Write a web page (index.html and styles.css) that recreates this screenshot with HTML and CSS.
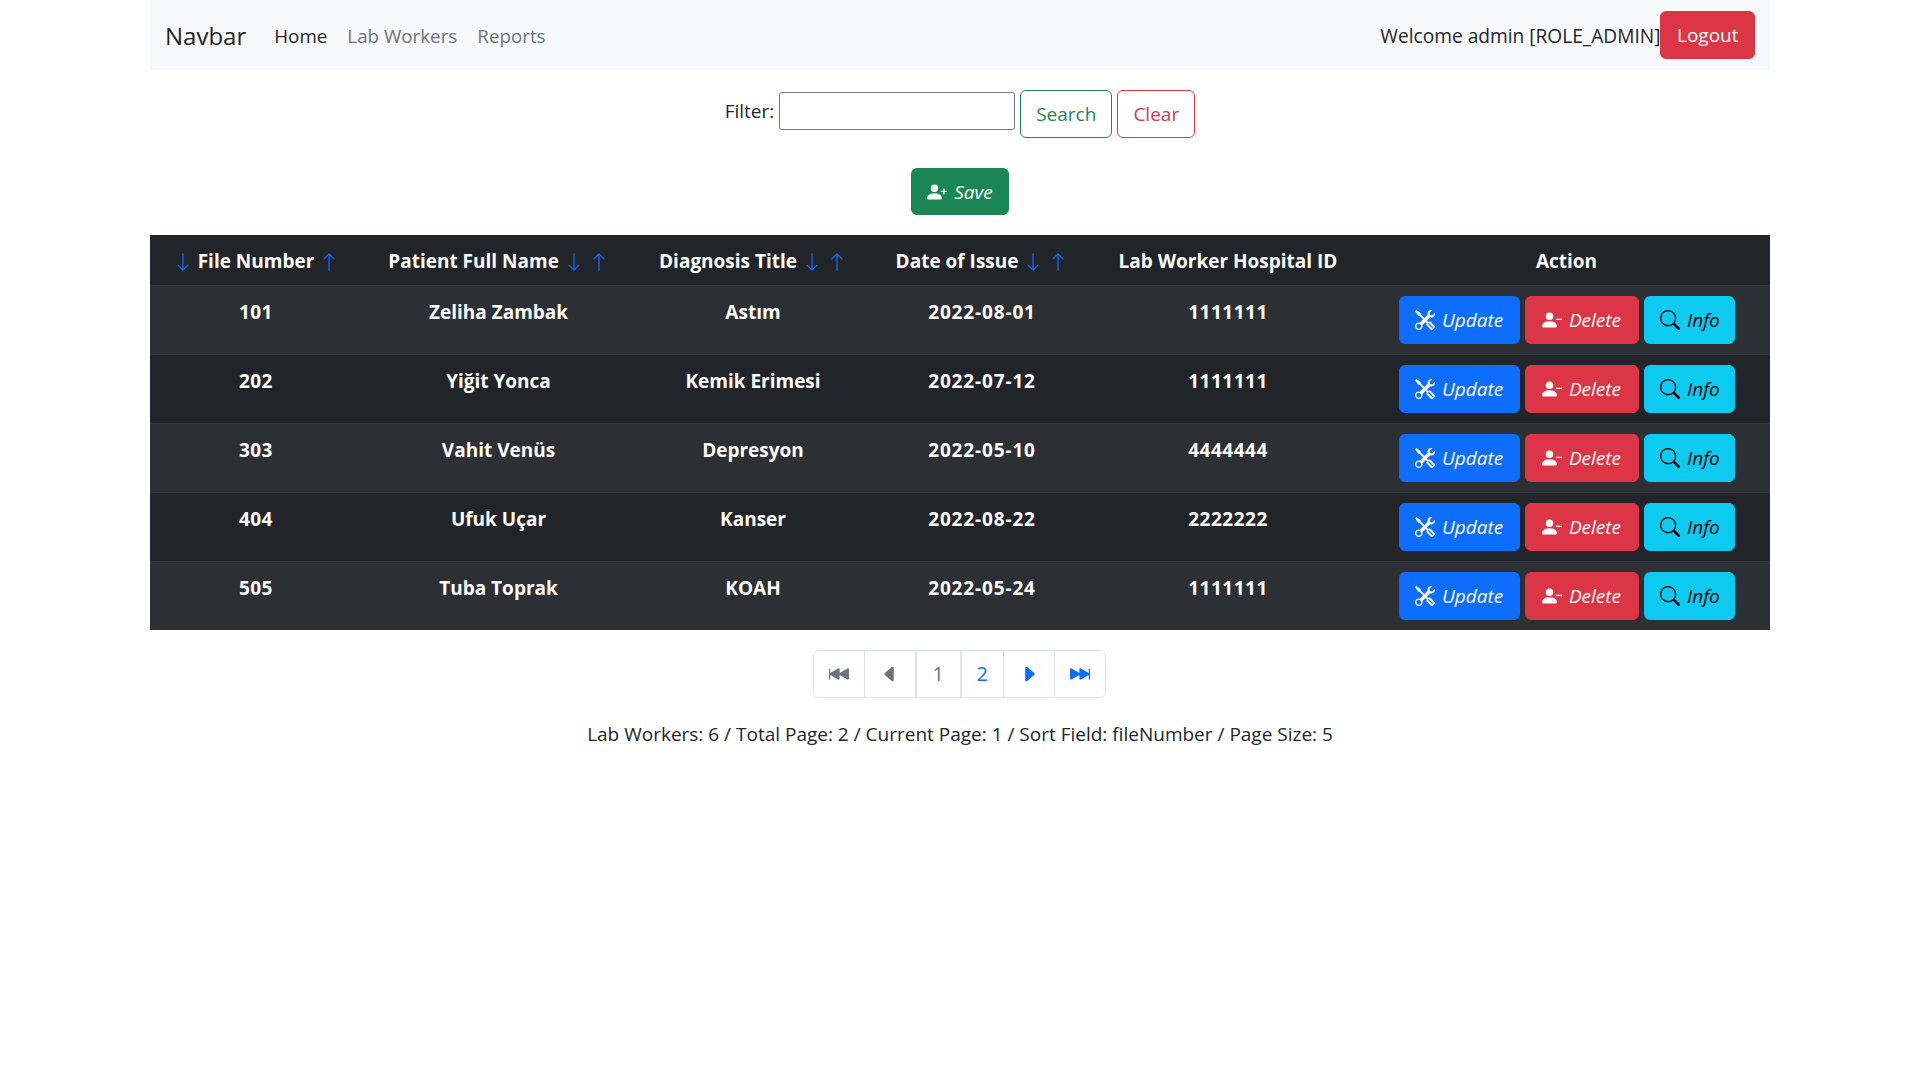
FILE: index.html
```html
<!DOCTYPE html>
<html lang="en">
<head>
<meta charset="UTF-8">
<meta name="viewport" content="width=device-width, initial-scale=1.0">
<title>Lab Workers</title>
<link rel="stylesheet" href="styles.css">
</head>
<body>
<svg class="sprite" xmlns="http://www.w3.org/2000/svg">
    <symbol id="i-down" viewBox="0 0 16 16"><path fill-rule="evenodd" d="M8 1a.5.5 0 0 1 .5.5v11.793l3.146-3.147a.5.5 0 0 1 .708.708l-4 4a.5.5 0 0 1-.708 0l-4-4a.5.5 0 0 1 .708-.708L7.5 13.293V1.5A.5.5 0 0 1 8 1z"/></symbol>
    <symbol id="i-up" viewBox="0 0 16 16"><path fill-rule="evenodd" d="M8 15a.5.5 0 0 0 .5-.5V2.707l3.146 3.147a.5.5 0 0 0 .708-.708l-4-4a.5.5 0 0 0-.708 0l-4 4a.5.5 0 1 0 .708.708L7.5 2.707V14.5a.5.5 0 0 0 .5.5z"/></symbol>
    <symbol id="i-tools" viewBox="0 0 16 16"><path d="M1 0 0 1l2.2 3.081a1 1 0 0 0 .815.419h.07a1 1 0 0 1 .708.293l2.675 2.675-2.617 2.654A3.003 3.003 0 0 0 0 13a3 3 0 1 0 5.878-.851l2.654-2.617.968.968-.305.914a1 1 0 0 0 .242 1.023l3.27 3.27a.997.997 0 0 0 1.414 0l1.586-1.586a.997.997 0 0 0 0-1.414l-3.27-3.27a1 1 0 0 0-1.023-.242L10.5 9.5l-.96-.96 2.68-2.643A3.005 3.005 0 0 0 16 3c0-.269-.035-.53-.102-.777l-2.14 2.141L12 4l-.364-1.757L13.777.102a3 3 0 0 0-3.675 3.68L7.462 6.46 4.793 3.793a1 1 0 0 1-.293-.707v-.071a1 1 0 0 0-.419-.814L1 0zm9.646 10.646a.5.5 0 0 1 .708 0l3 3a.5.5 0 0 1-.708.708l-3-3a.5.5 0 0 1 0-.708zM3 11l.471.242.529.026.287.445.445.287.026.529L5 13l-.242.471-.026.529-.445.287-.287.445-.529.026L3 15l-.471-.242L2 14.732l-.287-.445L1.268 14l-.026-.529L1 13l.242-.471.026-.529.445-.287.287-.445.529-.026L3 11z"/></symbol>
    <symbol id="i-person-plus" viewBox="0 0 16 16"><path d="M1 14s-1 0-1-1 1-4 6-4 6 3 6 4-1 1-1 1H1zm5-6a3 3 0 1 0 0-6 3 3 0 0 0 0 6z"/><path fill-rule="evenodd" d="M13.5 5a.5.5 0 0 1 .5.5V7h1.5a.5.5 0 0 1 0 1H14v1.5a.5.5 0 0 1-1 0V8h-1.5a.5.5 0 0 1 0-1H13V5.5a.5.5 0 0 1 .5-.5z"/></symbol>
    <symbol id="i-person-dash" viewBox="0 0 16 16"><path d="M1 14s-1 0-1-1 1-4 6-4 6 3 6 4-1 1-1 1H1zm5-6a3 3 0 1 0 0-6 3 3 0 0 0 0 6z"/><path fill-rule="evenodd" d="M11 7.5a.5.5 0 0 1 .5-.5h4a.5.5 0 0 1 0 1h-4a.5.5 0 0 1-.5-.5z"/></symbol>
    <symbol id="i-search" viewBox="0 0 16 16"><path d="M11.742 10.344a6.5 6.5 0 1 0-1.397 1.398h-.001c.03.04.062.078.098.115l3.85 3.85a1 1 0 0 0 1.415-1.414l-3.85-3.85a1.007 1.007 0 0 0-.115-.1zM12 6.5a5.5 5.5 0 1 1-11 0 5.5 5.5 0 0 1 11 0z"/></symbol>
    <symbol id="i-first" viewBox="0 0 16 16"><path d="M.5 3.5A.5.5 0 0 0 0 4v8a.5.5 0 0 0 1 0V8.753l6.267 3.636c.54.313 1.233-.066 1.233-.697v-2.94l6.267 3.636c.54.314 1.233-.065 1.233-.696V4.308c0-.63-.693-1.01-1.233-.696L8.5 7.248v-2.94c0-.63-.692-1.01-1.233-.696L1 7.248V4a.5.5 0 0 0-.5-.5z"/></symbol>
    <symbol id="i-prev" viewBox="0 0 16 16"><path d="m3.86 8.753 5.482 4.796c.646.566 1.658.106 1.658-.753V3.204a1 1 0 0 0-1.659-.753l-5.48 4.796a1 1 0 0 0 0 1.506z"/></symbol>
    <symbol id="i-next" viewBox="0 0 16 16"><path d="m12.14 8.753-5.482 4.796c-.646.566-1.658.106-1.658-.753V3.204a1 1 0 0 1 1.659-.753l5.48 4.796a1 1 0 0 1 0 1.506z"/></symbol>
    <symbol id="i-last" viewBox="0 0 16 16"><path d="M15.5 3.5a.5.5 0 0 1 .5.5v8a.5.5 0 0 1-1 0V8.753l-6.267 3.636c-.54.313-1.233-.066-1.233-.697v-2.94l-6.267 3.636C.693 12.703 0 12.324 0 11.693V4.308c0-.63.693-1.01 1.233-.696L7.5 7.248v-2.94c0-.63.693-1.01 1.233-.696L15 7.248V4a.5.5 0 0 1 .5-.5z"/></symbol>
</svg>

<div class="container">
    <nav class="navbar">
        <a class="brand" href="#">Navbar</a>
        <a class="nav-link active" href="#">Home</a>
        <a class="nav-link" href="#">Lab Workers</a>
        <a class="nav-link" href="#">Reports</a>
        <span class="welcome">Welcome admin [ROLE_ADMIN]</span>
        <button class="btn btn-danger">Logout</button>
    </nav>

    <form class="filter">
        <label for="keyword">Filter:</label>
        <input type="text" id="keyword" name="keyword">
        <button class="btn btn-outline-success" type="button">Search</button>
        <button class="btn btn-outline-danger" type="button">Clear</button>
    </form>

    <div class="save-row">
        <button class="btn btn-success btn-save"><svg class="icon"><use href="#i-person-plus"/></svg> <i>Save</i></button>
    </div>

    <table class="table">
        <thead>
            <tr>
                <th><svg class="sort"><use href="#i-down"/></svg> File Number <svg class="sort"><use href="#i-up"/></svg></th>
                <th>Patient Full Name <svg class="sort"><use href="#i-down"/></svg> <svg class="sort"><use href="#i-up"/></svg></th>
                <th>Diagnosis Title <svg class="sort"><use href="#i-down"/></svg> <svg class="sort"><use href="#i-up"/></svg></th>
                <th>Date of Issue <svg class="sort"><use href="#i-down"/></svg> <svg class="sort"><use href="#i-up"/></svg></th>
                <th>Lab Worker Hospital ID</th>
                <th>Action</th>
            </tr>
        </thead>
        <tbody>
            <tr>
                <td>101</td><td>Zeliha Zambak</td><td>Astım</td><td>2022-08-01</td><td>1111111</td>
                <td class="actions">
                    <button class="btn btn-primary"><svg class="icon"><use href="#i-tools"/></svg> <i>Update</i></button>
                    <button class="btn btn-danger"><svg class="icon"><use href="#i-person-dash"/></svg> <i>Delete</i></button>
                    <button class="btn btn-info"><svg class="icon"><use href="#i-search"/></svg> <i>Info</i></button>
                </td>
            </tr>
            <tr>
                <td>202</td><td>Yiğit Yonca</td><td>Kemik Erimesi</td><td>2022-07-12</td><td>1111111</td>
                <td class="actions">
                    <button class="btn btn-primary"><svg class="icon"><use href="#i-tools"/></svg> <i>Update</i></button>
                    <button class="btn btn-danger"><svg class="icon"><use href="#i-person-dash"/></svg> <i>Delete</i></button>
                    <button class="btn btn-info"><svg class="icon"><use href="#i-search"/></svg> <i>Info</i></button>
                </td>
            </tr>
            <tr>
                <td>303</td><td>Vahit Venüs</td><td>Depresyon</td><td>2022-05-10</td><td>4444444</td>
                <td class="actions">
                    <button class="btn btn-primary"><svg class="icon"><use href="#i-tools"/></svg> <i>Update</i></button>
                    <button class="btn btn-danger"><svg class="icon"><use href="#i-person-dash"/></svg> <i>Delete</i></button>
                    <button class="btn btn-info"><svg class="icon"><use href="#i-search"/></svg> <i>Info</i></button>
                </td>
            </tr>
            <tr>
                <td>404</td><td>Ufuk Uçar</td><td>Kanser</td><td>2022-08-22</td><td>2222222</td>
                <td class="actions">
                    <button class="btn btn-primary"><svg class="icon"><use href="#i-tools"/></svg> <i>Update</i></button>
                    <button class="btn btn-danger"><svg class="icon"><use href="#i-person-dash"/></svg> <i>Delete</i></button>
                    <button class="btn btn-info"><svg class="icon"><use href="#i-search"/></svg> <i>Info</i></button>
                </td>
            </tr>
            <tr>
                <td>505</td><td>Tuba Toprak</td><td>KOAH</td><td>2022-05-24</td><td>1111111</td>
                <td class="actions">
                    <button class="btn btn-primary"><svg class="icon"><use href="#i-tools"/></svg> <i>Update</i></button>
                    <button class="btn btn-danger"><svg class="icon"><use href="#i-person-dash"/></svg> <i>Delete</i></button>
                    <button class="btn btn-info"><svg class="icon"><use href="#i-search"/></svg> <i>Info</i></button>
                </td>
            </tr>
        </tbody>
    </table>

    <ul class="pagination">
        <li class="page-item"><svg class="page-icon muted"><use href="#i-first"/></svg></li>
        <li class="page-item thick"><svg class="page-icon muted"><use href="#i-prev"/></svg></li>
        <li class="page-item thick muted page-current">1</li>
        <li class="page-item link">2</li>
        <li class="page-item link"><svg class="page-icon"><use href="#i-next"/></svg></li>
        <li class="page-item link"><svg class="page-icon"><use href="#i-last"/></svg></li>
    </ul>

    <p class="summary">Lab Workers: 6 / Total Page: 2 / Current Page: 1 / Sort Field: fileNumber / Page Size: 5</p>
</div>
</body>
</html>
```

FILE: styles.css
```css
body {
    margin: 0;
    background-color: #fff;
    color: #212529;
    font-family: "Open Sans", "Noto Sans", sans-serif;
    font-size: 19px;
    line-height: 30px;
}

.sprite {
    display: none;
}

.container {
    width: 1620px;
    margin: 0 auto;
}

.navbar {
    display: flex;
    align-items: center;
    height: 70px;
    padding: 0 15px;
    background-color: #f8f9fa;
}

.navbar .btn {
    padding: 0 15.5px;
}

.brand {
    margin-right: 18px;
    padding-top: 2px;
    color: #212529;
    font-size: 24px;
    text-decoration: none;
}

.nav-link {
    padding: 2px 10px 0;
    color: #6c757d;
    font-size: 18.8px;
    text-decoration: none;
}

.nav-link.active {
    color: #212529;
}

.welcome {
    margin-left: auto;
    padding-top: 2px;
    font-size: 19.15px;
}

.btn {
    display: inline-block;
    height: 48px;
    padding: 0 15px;
    border: 1px solid transparent;
    border-radius: 6px;
    font-family: inherit;
    font-size: 19px;
    line-height: 30px;
    vertical-align: middle;
}

.btn i {
    font-style: italic;
}

.btn-save {
    height: 47px;
}

.btn-danger {
    background-color: #dc3545;
    border-color: #dc3545;
    color: #fff;
}

.btn-primary {
    background-color: #0d6efd;
    border-color: #0d6efd;
    color: #fff;
}

.btn-success {
    background-color: #198754;
    border-color: #198754;
    color: #fff;
}

.btn-info {
    background-color: #0dcaf0;
    border-color: #0dcaf0;
    color: #000;
}

.btn-outline-success {
    width: 92px;
    padding: 0;
    background: none;
    border-color: #198754;
    color: #198754;
}

.btn-outline-danger {
    width: 78px;
    padding: 0;
    background: none;
    border-color: #dc3545;
    color: #dc3545;
}

.icon {
    width: 20px;
    height: 20px;
    margin-right: 2px;
    fill: currentColor;
    vertical-align: -3px;
}

.filter {
    display: flex;
    justify-content: center;
    align-items: flex-start;
    gap: 5px;
    margin-top: 20px;
    height: 48px;
}

.filter label {
    margin-top: 6px;
}

.filter input {
    box-sizing: border-box;
    width: 236px;
    height: 38px;
    margin: 2px 0 0;
    border: 1px solid #767676;
    border-radius: 2.5px;
}

.save-row {
    display: flex;
    justify-content: center;
    margin-top: 30px;
    height: 47px;
}

.table {
    width: 100%;
    margin-top: 20px;
    border-collapse: collapse;
    table-layout: fixed;
    background-color: #212529;
    color: #fff;
    text-align: center;
}

.table th {
    box-sizing: border-box;
    height: 50px;
    padding: 2px 0 0;
    font-weight: 700;
    white-space: nowrap;
}

.table th:nth-child(1) {
    width: 212px;
}

.table th:nth-child(2) {
    width: 273px;
}

.table th:nth-child(3) {
    width: 236px;
}

.table th:nth-child(4) {
    width: 222px;
}

.table th:nth-child(5) {
    width: 270px;
}

.table td {
    height: 69px;
    padding: 11px 0 0;
    font-weight: 700;
    vertical-align: top;
    box-sizing: border-box;
    border-top: 1px solid #373b3e;
}

/* digits run wider in the original face */
.table td:nth-child(1) {
    letter-spacing: 0.4px;
}

.table td:nth-child(4) {
    letter-spacing: 0.85px;
}

.table td:nth-child(5) {
    letter-spacing: 0.5px;
}

.table tbody tr:nth-child(odd) {
    background-color: #2c3034;
}

.table td.actions {
    padding-top: 10px;
    font-weight: 400;
    white-space: nowrap;
}

.actions .btn {
    padding: 0;
    text-align: center;
}

.actions .btn-primary {
    width: 121px;
    margin-left: 1px;
}

.actions .btn-danger {
    width: 114px;
}

.actions .btn-info {
    width: 91px;
    margin-left: 1px;
}

.sort {
    width: 20px;
    height: 20px;
    fill: #0d6efd;
    vertical-align: -4px;
}

.pagination {
    display: flex;
    justify-content: center;
    margin: 20px 0 0;
    padding: 0;
    font-size: 20px;
    list-style: none;
}

.page-item {
    box-sizing: border-box;
    display: flex;
    align-items: center;
    justify-content: center;
    height: 48px;
    padding: 0 15px;
    border: 1px solid #dee2e6;
    margin-left: -1px;
    background-color: #fff;
}

.page-item:first-child {
    border-radius: 6px 0 0 6px;
}

.page-item:last-child {
    border-radius: 0 6px 6px 0;
}

.page-item.thick {
    border-right-width: 2px;
}

.page-item.page-current {
    padding: 0 15.5px;
}

.muted {
    color: #6c757d;
}

.link {
    color: #0d6efd;
}

.page-icon {
    width: 20px;
    height: 20px;
    fill: currentColor;
}

.summary {
    margin: 21px 0 0;
    text-align: center;
}
```
